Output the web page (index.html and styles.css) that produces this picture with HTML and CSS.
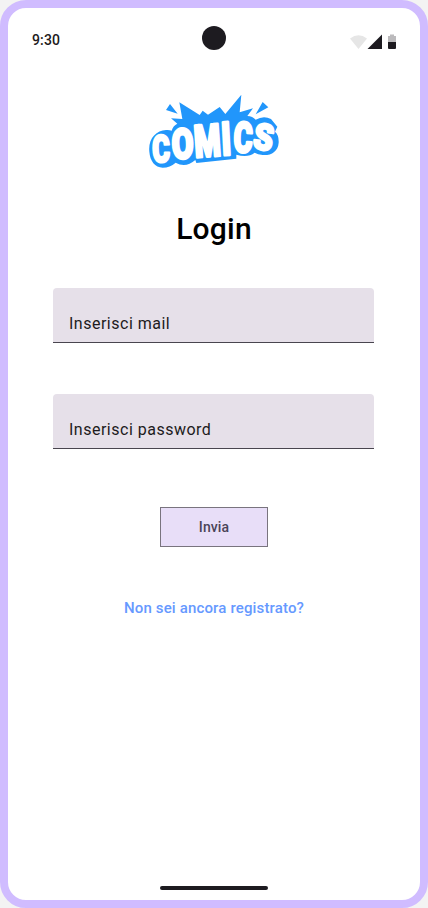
FILE: index.html
```html
<!DOCTYPE html>
<html lang="it">
<head>
<meta charset="utf-8">
<title>Login</title>
<link rel="stylesheet" href="styles.css">
</head>
<body>
<main class="phone">
  <header class="status">
    <span class="time">9:30</span>
    <span class="camera"></span>
    <svg class="indicators" viewBox="0 0 48 18" width="48" height="18">
      <path d="M0 4.6Q8.5-2.2 17 4.6L8.5 15Z" fill="#e6e6e6"/>
      <path d="M17.5 15L32 .5V15Z" fill="#1d1b20"/>
      <path d="M38 2h2V.5h4V2h2v6h-8Z" fill="#bbbabc"/>
      <path d="M38 8h8v6q0 1-1 1h-6q-1 0-1-1Z" fill="#1d1b20"/>
    </svg>
  </header>
  <svg class="logo" viewBox="0 0 450 270" width="150" height="90" role="img" aria-label="Comics">
    <g fill="#2196fb">
      <path d="M90 57L78 75L113 86ZM368 51L385 67L347 88Z"/>
      <path d="M28 200C24 162 48 136 78 135Q88 134 95 137Q99 122 112 116L93 100L127 102L118 52L179 90L188 77L204 89L239 66L256 87L304 29L299 82L339 70L322 93Q338 94 347 104Q371 90 393 102L412 125L405 140Q417 150 416 173C414 200 393 212 368 210Q353 209 344 203Q324 219 289 209V221L169 234L166 225Q137 250 107 233Q90 248 68 248C45 247 30 228 28 200Z"/>
    </g>
    <g class="letters">
      <text transform="translate(38 232) rotate(-2) scale(.8 1.12)">C</text>
      <text transform="translate(97 221) rotate(-2) scale(.94 1.25)">O</text>
      <text transform="translate(166 217) rotate(-4) scale(.9 1.33)">M</text>
      <text transform="translate(247 210) rotate(-3) scale(.94 1.37)">I</text>
      <text transform="translate(280 200) rotate(2) scale(.86 1.25)">C</text>
      <text transform="translate(336 189) rotate(9) scale(.94 1.08)">S</text>
    </g>
  </svg>
  <h1 class="title">Login</h1>
  <form class="form">
    <label class="field">Inserisci mail</label>
    <label class="field">Inserisci password</label>
    <button class="submit" type="button">Invia</button>
  </form>
  <a class="register">Non sei ancora registrato?</a>
  <div class="handle"></div>
</main>
</body>
</html>
```
FILE: styles.css
```css
* { box-sizing: border-box; }
body { margin: 0; background: #f3f3f3; font-family: Roboto, sans-serif; }
.phone {
  width: 428px;
  height: 908px;
  border: 8px solid #d0bcff;
  border-radius: 26px;
  background: #fff;
  display: flex;
  flex-direction: column;
  align-items: center;
}
.status {
  width: 100%;
  height: 52px;
  padding: 18px 22px 0 24px;
  display: grid;
  grid-template-columns: 170px 24px 1fr;
  align-items: start;
}
.time {
  font-size: 14px;
  line-height: 20px;
  padding-top: 4px;
  font-weight: 500;
  letter-spacing: .14px;
  color: #1d1b20;
}
.camera { width: 24px; height: 24px; border-radius: 50%; background: #1d1b20; }
.indicators { justify-self: end; margin-top: 8px; }
.logo { margin: 25px 0 0 2px; }
.letters {
  font: 900 100px Roboto, sans-serif;
  fill: #fff;
  stroke: #fff;
  stroke-width: 7px;
  stroke-linejoin: round;
}
.title {
  margin: 36px 0 0;
  font-size: 30px;
  line-height: 36px;
  font-weight: 500;
  letter-spacing: .2px;
  color: #000;
}
.form {
  width: 322px;
  margin-top: 41px;
  display: flex;
  flex-direction: column;
  align-items: center;
}
.field {
  width: 321px;
  align-self: flex-start;
  height: 55px;
  padding: 24px 16px 0;
  margin-bottom: 51px;
  border-bottom: 1px solid #49454f;
  border-radius: 4px 4px 0 0;
  background: #e6e0e9;
  color: #1d1b20;
  font-size: 16px;
  line-height: 24px;
  letter-spacing: .5px;
}
.submit {
  width: 108px;
  height: 40px;
  margin-top: 7px;
  padding: 0;
  border: 1px solid #79747e;
  background: #e8def8;
  color: #4a4458;
  font: 500 14px/20px Roboto, sans-serif;
  letter-spacing: .1px;
}
.register {
  margin-top: 51px;
  font-size: 15px;
  line-height: 20px;
  font-weight: 500;
  letter-spacing: .15px;
  color: #6699ff;
}
.handle { width: 108px; height: 4px; margin: auto 0 10px; border-radius: 4px; background: #1d1b20; }
```
